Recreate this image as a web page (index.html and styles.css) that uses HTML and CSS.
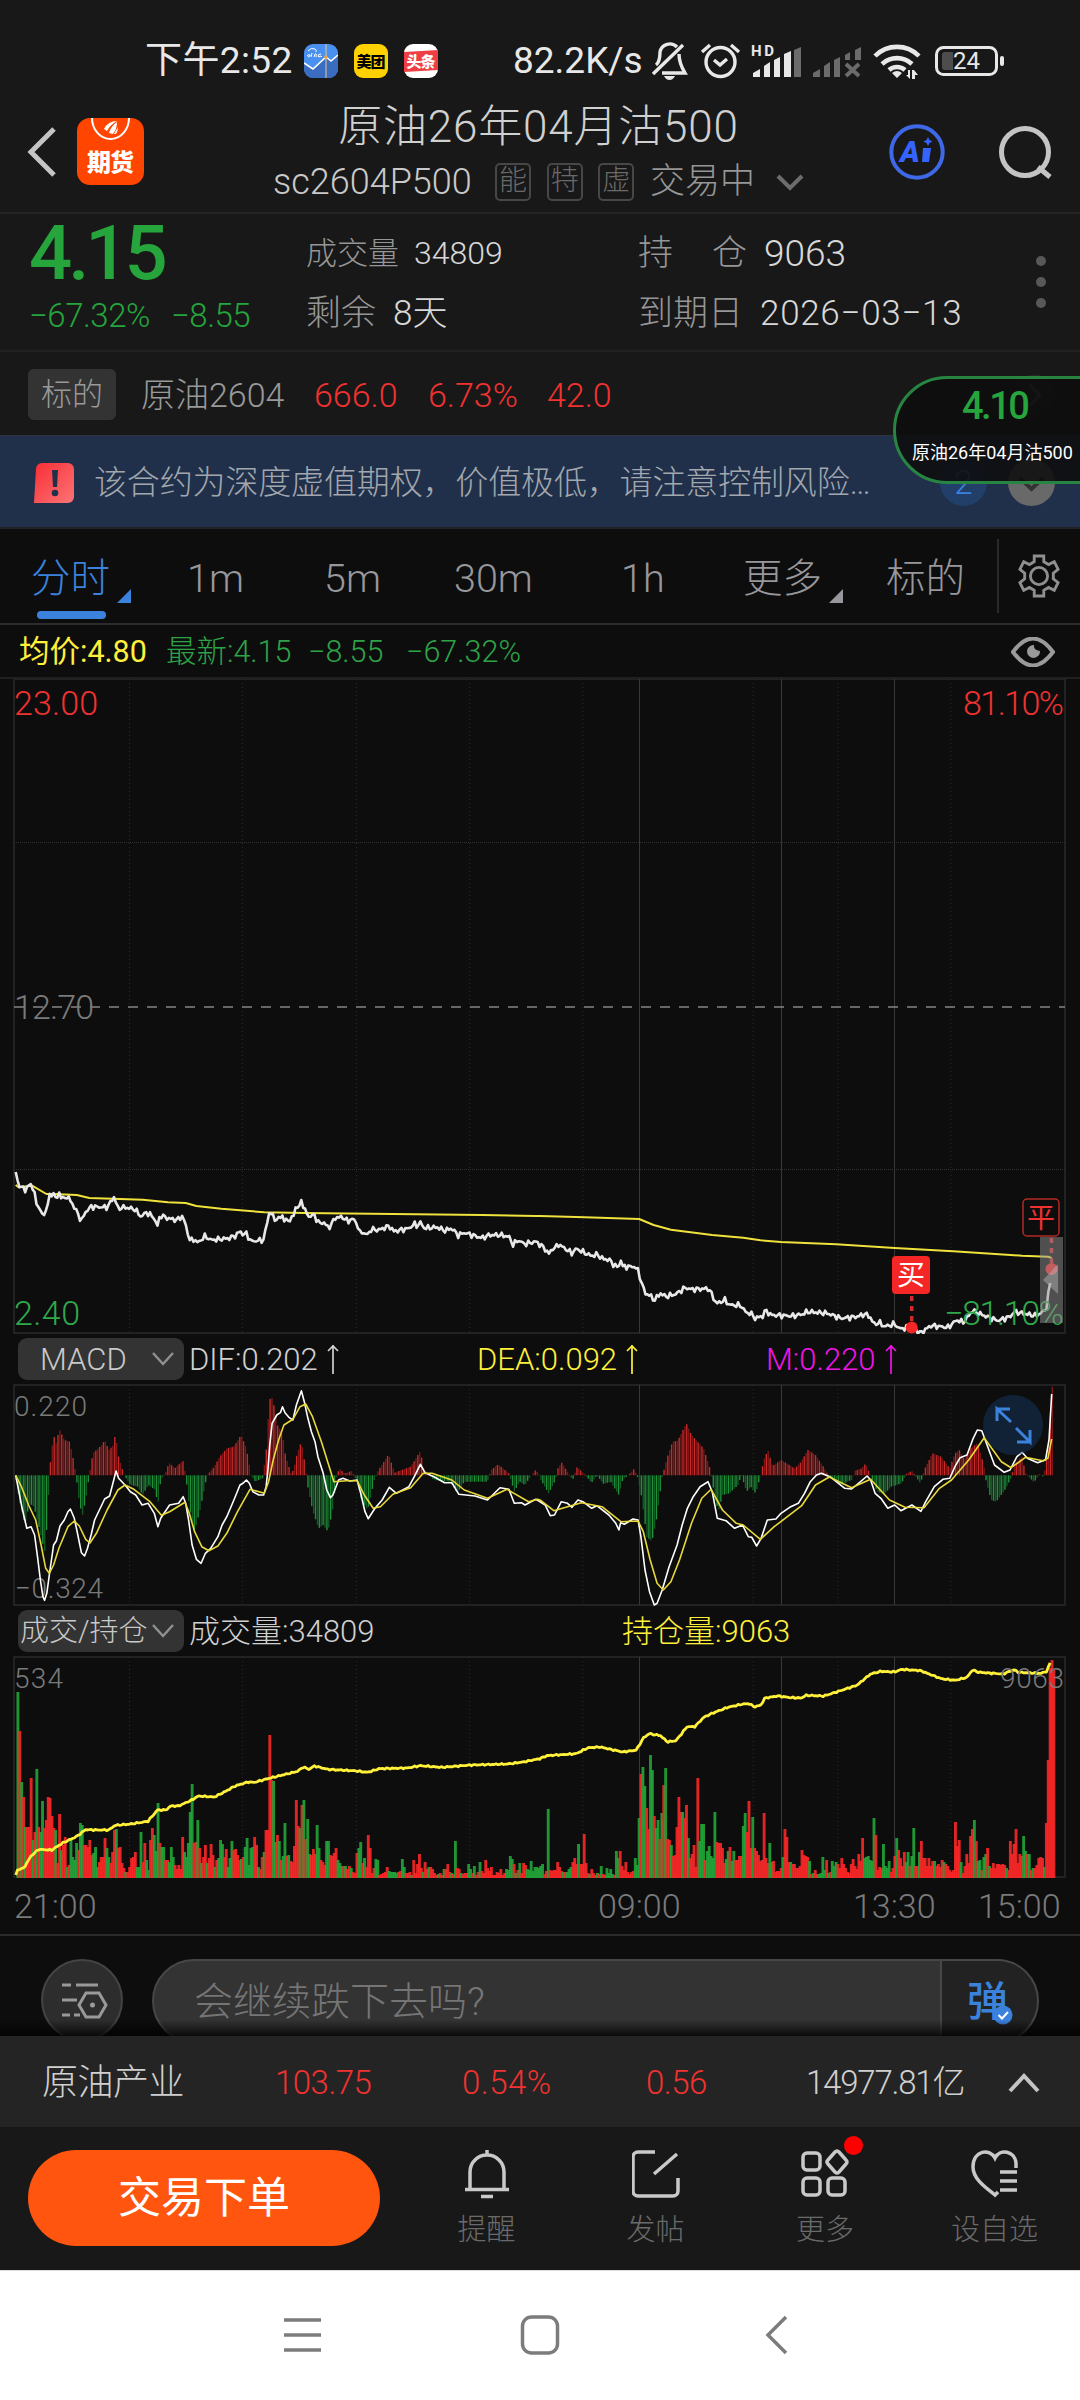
FILE: index.html
```html
<!DOCTYPE html>
<html lang="zh-CN">

<head>
	<meta charset="UTF-8">
	<meta name="viewport" content="width=device-width, initial-scale=1.0">
	<title>原油26年04月沽500</title>
	<link rel="stylesheet" href="styles.css">
	<script src="charts.js" defer></script>
</head>

<body>
	<header class="status">
		<span class="clock">下午2:52</span>
		<svg class="app" viewBox="0 0 34 34">
			<rect width="34" height="34" rx="9" fill="#4a90f0" />
			<path d="M0 19l9 6L22 13l5 4 7-6v14a9 9 0 0 1-9 9H9a9 9 0 0 1-9-9z" fill="#3a6dc0" />
			<path d="M0 19l9 6L22 13l5 4 7-6" fill="none" stroke="#fff" stroke-width="1.6" />
			<path d="M22 0v34" stroke="#e5c890" />
			<circle cx="22" cy="13" r="1.8" fill="#f0a030" />
			<path d="M3 12q2-2 3-1t-2 2M8 9l-1 4M10 13l1-3q2-1 1 3M17 10q-3 0-3 2t3 0l1 1M4 7q3-4 7-2 2 1 1 3" fill="none" stroke="#fff" />
		</svg>
		<svg class="app" viewBox="0 0 34 34">
			<rect width="34" height="34" rx="9" fill="#ffd100" />
			<text x="2.5" y="22.5" textLength="29" class="logo" font-size="15">美团</text>
		</svg>
		<svg class="app" viewBox="0 0 34 34">
			<rect width="34" height="34" rx="9" fill="#fff" />
			<path d="M0 8l34-2v20L0 28z" fill="#ee4044" />
			<text x="2.5" y="23" textLength="29" class="logo" font-size="15" fill="#fff">头条</text>
		</svg>
		<span class="speed">82.2K/s</span>
		<svg class="signals" viewBox="650 38 356 44" width="356" height="44">
			<g fill="none" stroke="#e8e8e8" stroke-width="3.4">
				<path d="M656 64q4-3 4-13a10 10 0 0 1 17-5M679 53q0 9 6 19h-23M653 73l30-29" />
				<path d="M664 75h11q-2 4-5.500 4t-5.500-4z" fill="#e8e8e8" stroke="none" />
				<circle cx="720.500" cy="61" r="14.500" />
				<path d="M714 59l6 5 7-6M702 51l8-7M739 51l-8-7" />
				<path d="M875 55a31 31 0 0 1 44 0M882 63a22 22 0 0 1 30 0M889 69a12 12 0 0 1 16 0" stroke-width="4.600" />
				<rect x="936.500" y="46.500" width="60" height="27" rx="7" stroke-width="3" />
			</g>
			<g fill="#e8e8e8">
				<path d="M892 72q5-4 10 0l-5 5zM910 69v9l-4-4h2v-5zM912 78v-9l2 0 4 5h-3v4z" />
				<path d="M753 76v-4l7-4v8zM764 76V65l6-4v15zM774 76V59l6-3v20zM784 76V53l7-3v26z" />
				<rect x="1000" y="55" width="4" height="10" rx="2" />
				<text x="751" y="55" font-size="15" font-weight="700" textLength="23">HD</text>
				<text x="953" y="68" font-size="24" textLength="27">24</text>
			</g>
			<path d="M794 76V49l7-3v30zM813 76v-4l7-4v8zM824 76V65l6-4v15zM834 76V59l6-3v20zM845 59v-5l5-3v8zM855 59V49l6-3v13z" fill="#6b6b6b" />
			<path d="M846 63l13 12M859 63l-13 12" stroke="#6b6b6b" stroke-width="4" />
			<path d="M953 51h-8a3 3 0 0 0-3 3v12a3 3 0 0 0 3 3h8z" fill="#4d4d4d" />
		</svg>
	</header>

	<section class="head">
		<svg class="back" viewBox="0 0 30 54" width="30" height="54"><path d="M27 4L4 27l23 23" /></svg>
		<svg class="qh" viewBox="0 0 67 67" width="67" height="67">
			<rect width="67" height="67" rx="13" fill="#ff4500" />
			<path d="M15 0a18.500 21 0 0 0 37 0" fill="none" stroke="#fff" stroke-width="2" />
			<path d="M27 11q4-8 13-8-7 4-10 10zM32 15q2-7 8-11 0 7-4 12zM37 16l4-7q0 4-2 7z" fill="#fff" />
			<text x="10" y="53" textLength="47" font-size="24" font-weight="900" fill="#fff">期货</text>
		</svg>
		<div class="title">
			<h1>原油26年04月沽500</h1>
			<p><span class="code">sc2604P500</span><i>能</i><i>特</i><i>虚</i><b>交易中</b>
				<svg viewBox="0 0 28 18" width="28" height="18"><path d="M2 3l12 12L26 3" /></svg></p>
		</div>
		<svg class="ai" viewBox="0 0 56 56" width="56" height="56">
			<circle cx="28" cy="28" r="25.700" />
			<text x="11" y="37.500" font-size="30" textLength="20">A</text>
			<path d="M34 24h8l-2 14h-7zM39 13l1.500 3 3 1.500-3 1.500-1.500 3-1.500-3-3-1.500 3-1.500z" />
		</svg>
		<svg class="search" viewBox="0 0 56 56" width="56" height="56"><circle cx="27" cy="28" r="23.500" /><path d="M40 43l12 10" /></svg>
	</section>

	<section class="quote">
		<div class="last"><strong>4.15</strong><span>−67.32%</span><span>−8.55</span></div>
		<dl class="c1">
			<div class="small"><dt>成交量</dt><dd>34809</dd></div>
			<div><dt>剩余</dt><dd>8天</dd></div>
		</dl>
		<dl class="c2">
			<div><dt class="wide"><span>持</span><span>仓</span></dt><dd>9063</dd></div>
			<div><dt>到期日</dt><dd class="date">2026−03−13</dd></div>
		</dl>
		<div class="dots"><i></i><i></i><i></i></div>
	</section>

	<section class="target">
		<span class="chip">标的</span><span>原油2604</span><em>666.0</em><em>6.73%</em><em>42.0</em>
		<svg viewBox="0 0 42 42" width="42" height="42"><circle cx="21" cy="21" r="20.500" fill="#272727" /><path d="M16 11l10 10-10 10" /></svg>
	</section>

	<section class="warn">
		<svg viewBox="0 0 41 40" width="41" height="40">
			<linearGradient id="w" x2="1" y2="1"><stop stop-color="#f92d35" /><stop offset="1" stop-color="#fb7577" /></linearGradient>
			<path d="M8 0h26a6 6 0 0 1 6 6v28a6 6 0 0 1-6 6H0L2 6a6 6 0 0 1 6-6z" fill="url(#w)" />
			<path d="M18 7h6l-1 17h-4z" fill="#22314b" /><circle cx="21" cy="30" r="3.300" fill="#22314b" />
		</svg>
		<p>该合约为深度虚值期权，价值极低，请注意控制风险…</p>
		<b>2</b>
		<svg viewBox="0 0 47 47" width="47" height="47"><circle cx="23.500" cy="23.500" r="23.500" fill="#696969" /><path d="M12 19l11.500 11L35 19" /></svg>
		<aside class="float"><strong>4.10</strong><span>原油26年04月沽500</span></aside>
	</section>

	<nav class="tabs">
		<a class="on drop">分时</a><a>1m</a><a>5m</a><a>30m</a><a>1h</a><a class="drop">更多</a><a>标的</a>
		<svg viewBox="0 0 44 46" width="44" height="46">
			<path d="M17 8V2h10v6l5 3 6-3 4 8-5 4v6l5 4-4 8-6-3-5 3v6H17v-6l-5-3-6 3-4-8 5-4v-6l-5-4 4-8 6 3z" /><circle cx="22" cy="23" r="9" />
		</svg>
	</nav>

	<section class="avg">
		<span class="yellow">均价:4.80</span><span>最新:4.15</span><span>−8.55</span><span>−67.32%</span>
		<svg viewBox="0 0 44 30" width="44" height="30"><path d="M2 15Q22-12 42 15 22 42 2 15z" /><path d="M23 8q-1 5 6 6a6.500 6.500 0 1 1-6-6z" class="fill" /></svg>
	</section>

	<main>
		<svg id="price" class="panel" width="1080" height="655" viewBox="0 679 1080 655">
			<g class="grid"></g>
			<path class="dash" d="M14 1007h1051" />
			<g class="plot"></g>
			<text x="14" y="715" textLength="84" class="red">23.00</text>
			<text x="963" y="715" textLength="101" class="red">81.10%</text>
			<text x="14" y="1019" textLength="80" class="dim">12.70</text>
			<text x="14" y="1325" textLength="66" class="green">2.40</text>
			<text x="944" y="1325" textLength="120" class="green">−81.10%</text>
			<path d="M1051.500 1238v32" class="lead" /><circle cx="1051.500" cy="1269" r="6" fill="#f52626" />
			<rect x="1040" y="1237" width="23" height="86" fill="#929292" opacity=".5" />
			<path d="M1058 1264v30l-15-14z" fill="#bbb" opacity=".45" />
			<rect x="1023" y="1199" width="36" height="37" rx="4" fill="#0d0d0d" stroke="#b12a26" stroke-width="1.500" />
			<text x="1027" y="1228" font-size="28" class="red mark">平</text>
			<path d="M911.700 1296v30" class="lead" /><circle cx="911.700" cy="1327.500" r="6" fill="#f52626" />
			<rect x="892" y="1256" width="38" height="38" rx="4" fill="#f52626" />
			<text x="897" y="1285" font-size="28" class="mark" fill="#fff">买</text>
		</svg>

		<div class="bar macd">
			<button>MACD<svg viewBox="0 0 22 14" width="22" height="14"><path d="M1 1l10 11L21 1" /></svg></button>
			<span>DIF:0.202<svg class="up" viewBox="0 0 12 30" width="12" height="30"><path d="M6 30V1M1 7l5-5 5 5" /></svg></span>
			<span class="yellow">DEA:0.092<svg class="up" viewBox="0 0 12 30" width="12" height="30"><path d="M6 30V1M1 7l5-5 5 5" /></svg></span>
			<span class="pink">M:0.220<svg class="up" viewBox="0 0 12 30" width="12" height="30"><path d="M6 30V1M1 7l5-5 5 5" /></svg></span>
		</div>
		<svg id="macd" class="panel" width="1080" height="222" viewBox="0 1384 1080 222">
			<g class="grid"></g>
			<g class="dim small"><text x="14" y="1416" textLength="73">0.220</text><text x="15" y="1598" textLength="88">−0.324</text></g>
			<g class="plot"></g>
			<circle cx="1013" cy="1425" r="30" fill="#17375f" opacity=".5" />
			<path d="M1011 1422l-14-13v12M997 1409h13M1016 1428l14 14v-12M1030 1442h-13" fill="none" stroke="#3b82dd" stroke-width="3" />
		</svg>

		<div class="bar vol">
			<button>成交/持仓<svg viewBox="0 0 22 14" width="22" height="14"><path d="M1 1l10 11L21 1" /></svg></button>
			<span>成交量:34809</span>
			<span class="yellow">持仓量:9063</span>
		</div>
		<svg id="vol" class="panel" width="1080" height="222" viewBox="0 1656 1080 222">
			<g class="grid"></g>
			<g class="plot"></g>
			<g class="dim small"><text x="14" y="1688" textLength="49">534</text><text x="1000" y="1688" textLength="64">9063</text></g>
		</svg>
		<div class="times"><span>21:00</span><span>09:00</span><span>13:30</span><span>15:00</span></div>
	</main>

	<section class="comment">
		<div class="set"><svg viewBox="0 0 48 38" width="48" height="38"><path d="M2 4h9M16 4h22M2 19h15M2 34h8M14 34h6" /><path d="M26 12h13l7 12-7 12H26l-7-12z" /><circle cx="32.500" cy="24" r="2.500" class="fill" /></svg></div>
		<div class="input"><span>会继续跌下去吗?</span>
			<b>弹<svg viewBox="0 0 20 20" width="20" height="20"><circle cx="10" cy="10" r="9.500" fill="#3b82dd" /><path d="M5.500 10l3.500 3.500 6-6.500" fill="none" stroke="#fff" stroke-width="2" /></svg></b>
		</div>
	</section>

	<section class="index">
		<span>原油产业</span><em>103.75</em><em class="pct">0.54%</em><em>0.56</em><span class="amount">14977.81亿</span>
		<svg viewBox="0 0 32 22" width="32" height="22"><path d="M2 19L16 4l14 15" /></svg>
	</section>

	<footer>
		<button class="order">交易下单</button>
		<a><svg viewBox="0 0 48 50" width="48" height="50"><path d="M7 40V23a17 17 0 0 1 34 0v17M2 40.500h44M24 6V1M18 47.500h12" /></svg>提醒</a>
		<a><svg viewBox="0 0 48 50" width="48" height="50"><path d="M23 3H6a5 5 0 0 0-5 5v34a5 5 0 0 0 5 5h35a5 5 0 0 0 5-5V29M22 25L45 5" /></svg>发帖</a>
		<a class="new"><svg viewBox="0 0 48 50" width="48" height="50"><rect x="2" y="4" width="17" height="17" rx="4" /><rect x="2" y="29" width="17" height="17" rx="4" /><rect x="27" y="29" width="17" height="17" rx="4" /><path d="M34 3q2-2 4 0l7 8q2 2 0 4l-7 8q-2 2-4 0l-7-8q-2-2 0-4z" /></svg>更多</a>
		<a><svg viewBox="0 0 48 50" width="48" height="50"><path d="M45 19V14C44 2 29-1 24 9 19-1 2 1 2 18c0 13 15 22 22 28l3-3M29 23h17M29 32h17M29 41h17" /></svg>设自选</a>
	</footer>

	<div class="sysnav">
		<svg viewBox="0 0 1080 129" width="1080" height="129"><path d="M284 49h37M284 64h37M284 79h37M786 46l-18 18 18 18" /><rect x="522.500" y="46" width="35" height="36" rx="9" /></svg>
	</div>
</body>

</html>
```
FILE: styles.css
```css
* {
	margin: 0;
	padding: 0;
	box-sizing: border-box;
}

body {
	width: 1080px;
	height: 2400px;
	overflow: hidden;
	background: #181818;
	color: #d0d0d0;
	font: 300 34px/1 Roboto, "Noto Sans CJK SC", sans-serif;
	white-space: nowrap;
}

svg {
	display: block;
	flex: none;
}

em, i, b {
	font-style: normal;
	font-weight: inherit;
}

em,
.red {
	color: #f03230;
	fill: #f03230;
}

.yellow {
	color: #fff03c !important;
}

.pink {
	color: #ee16e6;
}

/* status bar */
.status {
	display: flex;
	align-items: center;
	height: 98px;
	padding: 23px 0 0 145px;
	font-size: 37px;
	font-weight: 400;
	color: #e8e8e8;
}

.clock {
	width: 159px;
	letter-spacing: .4px;
}

.app {
	width: 34px;
	height: 34px;
	margin-right: 16px;
}

.logo {
	font-weight: 900;
}

.speed {
	width: 137px;
	margin-left: 59px;
}

/* title */
.head {
	display: grid;
	grid-template-columns: 50px 67px 1fr 56px 56px;
	align-items: center;
	height: 116px;
	padding: 0 26px 7px 27px;
	border-bottom: 2px solid #242424;
}

.head path,
.head circle {
	fill: none;
	stroke: #c4c4c4;
	stroke-width: 5;
}

.head .qh path {
	stroke: #fff;
	stroke-width: 2;
}

.head .qh path:nth-of-type(2) {
	fill: #fff;
	stroke: none;
}

.title {
	display: grid;
	justify-items: center;
	gap: 14px;
	margin-right: 9px;
	padding-top: 2px;
}

h1 {
	font-size: 44px;
	font-weight: 300;
	letter-spacing: .8px;
}

.title p {
	display: flex;
	align-items: center;
	font-size: 35px;
	color: #969696;
}

.code {
	width: 222px;
	color: #c9c9c9;
	font-size: 36px;
}

.title i {
	width: 36px;
	height: 38px;
	margin-right: 15.7px;
	border: 2px solid #474747;
	border-radius: 5px;
	color: #6a6a6a;
	font-size: 28px;
	line-height: 32px;
	text-align: center;
}

.title b {
	width: 126px;
}

.title p path {
	stroke: #6d6d6d;
	stroke-width: 4;
}

.head .ai {
	margin-left: -53px;
}

.head .ai circle {
	stroke: #3f68e6;
	stroke-width: 4;
}

.ai text,
.head .ai path {
	fill: #3463ff;
	stroke: none;
	font-weight: 900;
	font-style: italic;
}

/* quote */
.quote {
	display: grid;
	grid-template-columns: 277px 332px 398px 1fr;
	height: 138px;
	padding-left: 29px;
	border-bottom: 2px solid #212121;
}

.last {
	display: grid;
	grid-template: 77px 1fr / 142px 1fr;
	color: #25a53c;
	font-size: 33px;
	letter-spacing: -.5px;
}

.last strong {
	grid-column: 1/3;
	padding-top: 1px;
	font-size: 76px;
	font-weight: 500;
	letter-spacing: -4px;
}

.last span {
	padding-top: 8px;
}

dl {
	display: grid;
	grid-template-rows: 40px 40px;
	row-gap: 20px;
	padding-top: 19px;
}

dl div {
	display: flex;
	align-items: center;
	gap: 17px;
	font-size: 35px;
}

dl .small {
	gap: 15px;
	font-size: 31px;
}

.small dd {
	font-size: 32px;
}

dl dt {
	color: #969696;
}

dl dd {
	color: #d8d8d8;
}

dl .wide {
	display: flex;
	justify-content: space-between;
	width: 109px;
}

.wide + dd {
	font-size: 37px;
}

.date {
	letter-spacing: .7px;
}

.dots {
	display: grid;
	align-content: center;
	gap: 11px;
}

.dots i {
	width: 10px;
	height: 10px;
	border-radius: 50%;
	background: #585858;
}

/* underlying */
.target {
	display: grid;
	grid-template-columns: 113px 173px 114px 119px 467px 1fr;
	align-items: center;
	height: 83px;
	padding: 2px 0 0 28px;
	color: #999;
	font-size: 34px;
}

.chip {
	width: 88px;
	height: 51px;
	border-radius: 6px;
	background: #333;
	font-size: 31px;
	line-height: 51px;
	text-align: center;
}

.target path {
	fill: none;
	stroke: #555;
	stroke-width: 3;
}

/* risk notice */
.warn {
	position: relative;
	display: grid;
	grid-template-columns: 60px 846px 68px 47px;
	align-items: center;
	height: 94px;
	padding: 2px 0 0 34px;
	border-top: 1px solid #30353d;
	border-bottom: 2px solid #202227;
	background: #20304a;
	color: #a2a7ae;
	font-size: 33px;
}

.warn p {
	letter-spacing: -.15px;
}

.warn b {
	width: 47px;
	height: 47px;
	border-radius: 50%;
	background: #213f68;
	color: #3b82dd;
	line-height: 47px;
	text-align: center;
}

.warn path:not([fill]) {
	fill: none;
	stroke: #333;
	stroke-width: 4;
}

.float {
	position: absolute;
	right: -3px;
	top: -60px;
	width: 190px;
	height: 108px;
	padding: 8px 0 0 16px;
	border: 3px solid #288541;
	border-radius: 54px 0 0 54px;
	background: #0c0c0ce0;
	color: #fff;
	font-size: 18px;
	font-weight: 400;
}

.float strong {
	display: block;
	padding-left: 50px;
	margin-bottom: 19px;
	color: #25a53c;
	font-size: 38px;
	font-weight: 500;
	letter-spacing: -2.5px;
}

/* periods */
.tabs {
	display: grid;
	grid-template-columns: 156px 137px 130px 167px 122px 143px 110px 1fr;
	align-items: center;
	height: 96px;
	padding-left: 31px;
	border-bottom: 2px solid #2c2c2c;
	background: #0d0d0d;
	color: #97979c;
	font-size: 39.500px;
}

.tabs a {
	position: relative;
	padding-top: 6px;
}

.tabs .on {
	color: #3b82dd;
}

.on::before {
	content: "";
	position: absolute;
	left: 6px;
	top: 58px;
	width: 69px;
	height: 8px;
	border-radius: 4px;
	background: currentcolor;
}

.drop::after {
	content: "";
	position: absolute;
	left: 86px;
	top: 36px;
	border-left: 14px solid transparent;
	border-bottom: 14px solid currentcolor;
}

.tabs svg {
	width: 64px;
	height: 74px;
	margin-left: 1px;
	padding: 14px 1px 14px 19px;
	border-left: 2px solid #292929;
	fill: none;
	stroke: #8f8f8f;
	stroke-width: 3;
}

.avg {
	display: grid;
	grid-template-columns: 147px 142px 98px 605px 44px;
	align-items: center;
	height: 54px;
	padding: 2px 0 0 19px;
	border-bottom: 2px solid #202020;
	background: #0d0d0d;
	color: #2da347;
	font-size: 30.500px;
}

.avg .yellow {
	font-weight: 400;
}

.avg svg {
	fill: none;
	stroke: #9a9a9a;
	stroke-width: 4;
}

svg .fill {
	fill: #9a9a9a;
	stroke: none;
}

/* charts */
main {
	height: 1257px;
	background: #0d0d0d;
}

.panel {
	font-size: 34px;
}

.small text {
	font-size: 28px;
}

.green {
	fill: #2fa84a;
}

.dim {
	fill: #7a7a7a;
}

.dash,
.lead {
	fill: none;
	stroke: #858585;
	stroke-width: 1.5;
	stroke-dasharray: 10 9;
}

.lead {
	stroke: #d02a2a;
	stroke-width: 3.5;
	stroke-dasharray: 5 5;
}

.mark {
	font-weight: 400;
}

.bar {
	display: grid;
	grid-template-columns: 171px 288px 289px 1fr;
	align-items: center;
	height: 50px;
	padding-left: 18px;
	font-size: 31px;
}

.vol {
	grid-template-columns: 171px 433px 1fr;
}

.bar button {
	display: flex;
	align-items: center;
	justify-content: space-between;
	width: 166px;
	height: 42px;
	padding: 0 10px 0 22px;
	border: 0;
	border-radius: 9px;
	background: #333;
	color: #c9c9c9;
	font: inherit;
}

.vol button {
	padding-left: 2px;
	font-size: 29px;
}

.bar span {
	display: flex;
	align-items: center;
	gap: 9px;
}

.bar button path,
.up path {
	fill: none;
	stroke: #909090;
	stroke-width: 2.5;
}

.up path {
	stroke: currentcolor;
	stroke-width: 1.7;
}

.times {
	display: grid;
	grid-template-columns: 584px 255px 125px 1fr;
	align-items: center;
	height: 58px;
	padding: 0 0 1px 14px;
	border-bottom: 2px solid #2b2b2b;
	color: #7a7a7a;
	font-size: 34px;
}

/* comment strip, cut off by the bars below */
.comment {
	position: relative;
	display: flex;
	gap: 29px;
	height: 100px;
	padding: 23px 41px 0;
	overflow: hidden;
	background: #0d0d0d;
}

.comment::after {
	content: "";
	position: absolute;
	inset: 84px 0 0;
	background: linear-gradient(#0000, #000c);
}

.set {
	display: grid;
	place-items: center;
	width: 82px;
	height: 82px;
	border: 2px solid #444;
	border-radius: 50%;
	background: #2d2d2d;
}

.set svg {
	margin-left: 4px;
	fill: none;
	stroke: #999;
	stroke-width: 3;
}

.input {
	display: flex;
	flex: 1;
	height: 84px;
	border: 2px solid #474747;
	border-radius: 42px;
	background: #333;
	color: #757575;
	font-size: 39px;
	line-height: 82px;
	overflow: hidden;
}

.input span {
	flex: 1;
	padding-left: 40px;
}

.input b {
	position: relative;
	width: 97px;
	padding-left: 25px;
	border-left: 2px solid #474747;
	background: #222;
	color: #3b82dd;
	font-size: 41px;
	font-weight: 500;
}

.input b svg {
	position: absolute;
	left: 51px;
	top: 44px;
}

.index {
	display: grid;
	grid-template-columns: 233px 187px 184px 160px 202px 1fr;
	align-items: center;
	height: 91px;
	padding: 2px 0 0 42px;
	background: #242424;
	font-size: 33px;
	letter-spacing: -.5px;
}

.index .pct {
	letter-spacing: .5px;
}

.index .amount {
	letter-spacing: -1.2px;
}

.index span:first-child {
	font-size: 36px;
}

.index path {
	fill: none;
	stroke: #c4c4c4;
	stroke-width: 4;
}

footer {
	display: grid;
	grid-template-columns: 374px 169px 169px 170px 169px;
	height: 143px;
	padding: 23px 0 0 28px;
}

.order {
	width: 352px;
	height: 96px;
	border: 0;
	border-radius: 48px;
	background: #ff550f;
	color: #fff;
	font: 400 43px/96px Roboto, "Noto Sans CJK SC", sans-serif;
}

footer a {
	position: relative;
	display: grid;
	justify-items: center;
	align-content: start;
	gap: 17px;
	color: #6a6a6a;
	font-size: 29px;
}

footer svg {
	margin-top: -1px;
	fill: none;
	stroke: #c9c9c9;
	stroke-width: 3.5;
}

.new::after {
	content: "";
	position: absolute;
	left: 104px;
	top: -14px;
	width: 19px;
	height: 19px;
	border-radius: 50%;
	background: #f00;
}

.sysnav {
	height: 130px;
	border-top: 1px solid #ddd;
	background: #fff;
	fill: none;
	stroke: #7c7c7c;
	stroke-width: 3.5;
}
```
FILE: charts.js
```js
const X0 = 15.7, STEP = 1.894, COUNT = 548;
const RED = ['#c82a2a', '#7d1717'], GREEN = ['#20913a', '#135a25'];

// points come in two halves (left, right), each with its own horizontal scale
const pts = s => s.trim().split(/\s+/).map(p => p.split(',').map(Number));
const join = (a, b, top) => [
	...pts(a).map(([x, y]) => [x / 2.8, top + y / 3]),
	...pts(b).map(([x, y]) => [540 + x / 2.904, top + y / 3])
];

const at = (line, x) => {
	let i = 1;
	while (i < line.length - 1 && line[i][0] < x) i++;
	const [a, b] = [line[i - 1], line[i]];
	return a[1] + (b[1] - a[1]) * Math.min(1, Math.max(0, (x - a[0]) / (b[0] - a[0] || 1)));
};

const price = join(
	`44,156 47,190 52,178 56,205 63,200 68,212 85,192 97,215 103,268 108,252 115,280 123,287 130,265 138,232 150,217 157,242 166,217 175,240 185,228 195,238 210,265 228,303 240,275 255,260 300,262 320,230 330,265 350,262 378,268 395,290 410,277 430,292 442,320 448,285 470,295 495,300 512,288 532,362 545,358 553,369 575,348 590,360 640,355 660,347 672,333 682,345 690,340 702,364 738,360 755,272 768,297 780,297 790,285 797,304 820,295 828,260 838,262 844,240 855,275 868,292 877,282 895,312 905,305 920,325 940,292 960,292 975,305 985,295 1000,310 1007,340 1015,335 1027,346 1040,328 1060,330 1090,318 1103,334 1145,325 1160,312 1170,318 1177,307 1187,324 1225,322 1245,332 1265,325 1283,346 1300,338 1330,348 1350,354 1370,345 1400,345 1425,350 1437,375 1450,360 1468,372 1500,365 1520,380 1538,402 1550,380`,
	`0,375 20,380 26,402 40,388 53,373 72,385 93,400 105,386 125,396 150,408 165,403 185,418 200,418 212,432 228,444 234,415 240,440 275,440 285,452 294,485 305,520 318,525 332,541 350,520 365,530 395,522 422,503 440,508 490,506 500,525 512,551 537,540 550,555 583,556 600,580 610,578 625,595 647,588 655,570 670,585 735,588 765,582 775,575 835,580 875,595 920,590 945,582 958,590 970,613 985,607 1000,620 1030,612 1045,627 1080,620 1104,640 1135,617 1185,622 1210,600 1230,607 1256,572 1285,585 1330,602 1365,590 1378,575 1400,580 1440,587 1462,575 1472,560 1480,490 1486,477`, 1120);

const avg = join(
	`44,195 52,202 90,197 130,222 150,222 215,225 250,234 400,239 470,247 520,249 550,258 620,266 740,277 850,279 1350,285 1500,288`,
	`0,288 130,292 288,297 330,315 380,329 500,345 590,353 640,361 700,366 860,373 1030,384 1200,394 1400,407 1475,410 1486,414`, 1120);

const dif = join(
	`44,1066 52,1110 62,1165 75,1225 87,1220 97,1245 105,1310 113,1380 120,1430 125,1441 131,1420 140,1350 150,1275 158,1262 168,1218 180,1200 190,1175 197,1167 208,1195 215,1230 228,1298 237,1308 245,1285 255,1245 265,1200 285,1155 293,1137 307,1128 325,1053 332,1075 350,1095 365,1115 380,1125 398,1155 415,1150 432,1180 442,1220 450,1195 475,1155 500,1150 513,1130 520,1150 528,1200 538,1275 550,1318 563,1330 575,1300 590,1285 610,1250 622,1215 635,1190 655,1140 672,1095 680,1090 690,1080 698,1090 708,1115 725,1125 738,1125 745,1100 750,1050 755,980 762,910 775,885 785,878 791,860 798,878 810,893 820,900 830,855 844,812 852,845 862,895 872,935 882,965 890,1010 905,1060 915,1110 925,1133 932,1125 948,1080 960,1075 980,1083 1000,1080 1010,1120 1022,1175 1031,1196 1050,1165 1070,1140 1090,1102 1110,1120 1145,1100 1160,1070 1177,1033 1190,1058 1215,1070 1245,1088 1265,1088 1285,1123 1330,1128 1365,1140 1400,1103 1425,1108 1440,1150 1460,1148 1470,1155 1500,1138 1520,1150`,
	`0,1145 15,1155 30,1187 42,1185 62,1145 80,1150 93,1162 110,1140 125,1145 150,1165 165,1157 200,1185 220,1210 229,1230 234,1208 245,1213 270,1197 285,1200 293,1250 305,1350 318,1415 332,1455 340,1450 355,1410 375,1340 398,1275 413,1215 428,1165 445,1130 465,1100 488,1085 500,1115 515,1195 540,1202 565,1225 588,1215 605,1250 615,1252 629,1278 642,1255 660,1200 685,1197 700,1180 725,1162 750,1150 768,1120 785,1085 803,1065 817,1060 845,1072 885,1105 905,1107 925,1090 950,1068 960,1080 973,1120 990,1135 1010,1165 1030,1155 1048,1172 1080,1155 1106,1174 1120,1145 1145,1100 1170,1078 1190,1075 1205,1040 1220,1013 1240,1005 1258,955 1270,930 1283,932 1300,980 1320,1035 1348,1057 1365,1050 1385,1010 1400,997 1415,1015 1445,1028 1468,1020 1478,960 1486,822`, 1120);

const dea = join(
	`44,1066 60,1100 80,1155 100,1200 115,1275 128,1345 138,1360 150,1335 165,1285 190,1220 208,1203 222,1218 240,1258 252,1269 270,1240 300,1170 330,1110 350,1095 375,1108 420,1145 452,1186 475,1175 518,1147 530,1180 545,1235 565,1280 585,1292 610,1278 635,1240 665,1175 700,1108 740,1120 752,1085 765,1020 780,960 795,915 820,898 840,860 856,852 875,890 900,965 935,1085 970,1082 1000,1082 1020,1125 1045,1165 1065,1160 1100,1123 1150,1103 1185,1060 1210,1060 1265,1080 1300,1110 1365,1135 1420,1108 1480,1145 1505,1138`,
	`0,1140 40,1172 120,1148 180,1160 235,1205 285,1203 300,1235 320,1320 340,1390 358,1410 380,1385 405,1320 440,1210 470,1135 497,1108 530,1170 570,1210 590,1215 640,1258 680,1220 760,1157 800,1095 840,1071 905,1103 960,1078 1015,1140 1060,1162 1115,1163 1160,1105 1195,1080 1245,1020 1290,953 1340,1025 1368,1043 1410,1012 1460,1022 1475,1015 1486,957`, 1120);

const hist = join(
	`44,1066 52,1130 70,1215 82,1150 95,1160 108,1215 125,1295 133,1200 138,1066 142,1015 150,945 157,970 166,928 180,960 195,965 205,1015 213,1066 220,1130 230,1190 240,1140 250,1066 260,1000 285,975 293,960 305,990 318,975 323,940 332,1010 348,1066 365,1095 385,1100 400,1125 415,1095 435,1110 442,1158 450,1080 465,1055 473,1028 490,1045 512,1022 520,1066 530,1160 545,1235 560,1170 580,1066 600,1040 615,1010 635,985 655,980 675,945 690,985 703,1066 715,1085 735,1075 745,1000 752,880 758,820 768,860 778,920 790,935 800,1010 815,1060 822,1050 832,1000 844,965 855,1040 860,1090 875,1170 892,1225 905,1215 918,1235 930,1180 942,1070 950,1045 965,1060 985,1053 1000,1085 1012,1140 1030,1170 1048,1080 1060,1050 1088,1003 1105,1058 1150,1040 1177,993 1187,1050 1200,1062 1215,1080 1260,1085 1280,1120 1300,1085 1365,1085 1375,1050 1395,1033 1425,1060 1440,1115 1455,1085 1470,1095 1485,1070 1500,1050 1510,1065`,
	`0,1075 25,1120 45,1080 52,1045 63,1028 85,1064 95,1080 108,1040 128,1062 150,1088 165,1066 185,1092 205,1085 229,1125 240,1080 260,1062 273,1047 285,1075 295,1130 310,1250 325,1265 338,1200 355,1070 370,1010 385,965 400,962 425,910 440,945 460,968 475,985 492,1040 500,1080 510,1150 520,1168 530,1125 550,1120 575,1095 585,1066 600,1115 612,1100 626,1120 640,1070 650,1020 662,990 675,1038 700,1020 740,1045 755,1030 778,990 800,1005 820,1035 840,1070 870,1095 905,1080 915,1052 935,1045 946,1030 960,1068 980,1115 1000,1122 1020,1100 1050,1090 1065,1060 1080,1053 1095,1075 1105,1090 1118,1045 1140,1000 1165,1010 1190,1045 1205,1000 1218,990 1232,1020 1250,985 1270,970 1288,1030 1295,1080 1310,1140 1325,1145 1350,1110 1370,1070 1376,1035 1400,1010 1410,1060 1435,1087 1450,1062 1462,1070 1470,1030 1478,970 1486,800`, 1120);

const open = join(
	`44,825 50,808 66,805 87,768 108,748 145,750 177,728 214,710 240,689 275,690 305,690 322,676 366,672 414,664 441,630 465,630 478,618 500,618 537,600 555,588 600,591 630,575 658,558 695,546 712,547 753,535 833,514 849,501 865,508 880,498 918,508 1000,513 1029,517 1062,506 1140,504 1177,497 1235,502 1320,495 1420,492 1465,486 1500,478`,
	`0,476 20,467 105,461 140,443 175,441 240,456 280,450 300,414 317,401 350,407 370,426 395,422 427,380 450,380 475,352 500,340 545,322 590,312 608,311 622,321 642,315 653,294 690,288 730,293 760,294 772,286 825,288 920,256 960,222 990,214 1030,216 1050,208 1105,212 1165,236 1205,241 1240,232 1256,210 1275,217 1345,222 1376,209 1390,217 1455,220 1472,214 1485,178`, 1600);

// one bar a minute, negative = falling
const volume = [
	-186, 147, -96, 81, -51, 51, 51, 100, -38, 46, -109, 51, -46, -77, 50, 58, 81, 80, 62, 50,
	-48, 15, 64, -28, 33, 41, -11, 13, -38, -21, -18, -35, 28, -55, -53, 33, 33, 31, 38, 23,
	-25, -31, -11, 16, 21, 21, 40, -30, -21, 15, 26, 48, -49, 30, 31, 15, 10, -6, 6, 11,
	20, 21, 26, -11, -11, -46, 16, 35, -18, -8, 38, 50, -43, -27, -75, 35, -31, -31, 18, 18,
	-16, -31, -21, 13, 9, 13, 9, 41, -26, -21, -35, -66, -94, 35, 36, -58, 30, -15, 21, 33,
	-15, 20, 34, 23, -11, 18, -20, -38, -34, 21, 29, -11, -20, -37, 28, 29, 23, 18, -19, 21,
	-31, -40, -13, -30, -31, 41, 33, -11, 9, 21, -26, 48, 48, 143, 98, -97, -36, 43, -37, 18,
	-22, -55, 22, -23, 17, 16, 32, 78, 52, -50, 73, -78, 39, -59, -24, 23, 29, 24, -53, -30,
	18, 16, 13, -37, -37, 23, 22, 25, 30, -18, -15, -12, 12, -12, 9, 12, -10, 6, 5, 25,
	-30, -36, 15, -20, 11, 43, 30, 5, 10, -19, -18, 3, 4, 5, 6, 11, -7, -6, -6, -6,
	-5, 6, 7, -19, -11, 5, 5, 6, -3, 18, 5, 14, 24, 10, -6, 16, 9, -11, 11, 9,
	5, 3, -4, 5, 3, -9, 9, 14, 6, -5, 4, -37, 10, 9, -5, 4, 5, 5, -14, -9,
	5, -12, 3, 6, -16, 7, 5, 18, 10, 7, 11, 3, 3, 6, 5, 9, 3, 5, -9, -8,
	-22, -19, 14, -5, 8, -15, 5, 15, 13, -9, -8, -17, -7, -11, -11, -10, -12, -14, 4, 7,
	-69, 8, 7, 8, 8, 16, 11, 7, -6, 6, -6, -9, -11, 16, 20, 14, -34, 14, 14, 44,
	15, 5, -4, 9, 5, 3, -5, 4, -12, 4, 3, -10, -5, -9, -4, 3, -27, -20, 27, 12,
	8, 16, 6, 4, 6, 7, -20, -13, -60, 104, -111, -92, 70, 49, -123, -108, 62, -50, -58, 39,
	-65, 93, -110, 39, 38, -33, 22, 23, 51, 81, 66, -66, 60, 73, -40, 20, 24, 33, 11, 100,
	-37, -54, -54, 18, -27, -32, -22, -20, -66, 36, 35, 35, 30, 15, -19, -27, 31, -17, -27, 18,
	18, 22, 22, -52, -65, 46, 77, 30, -61, 30, 27, 23, 17, 18, 65, 20, 15, -35, -16, 17,
	6, 7, 7, 10, -21, 49, 41, 16, -16, 14, 14, 10, 10, 12, 28, 23, 22, 21, -17, 4,
	-5, 8, 4, -4, -5, -21, -8, 18, -5, 6, -17, -12, -16, 14, 10, 20, 14, 10, 6, 5,
	14, 19, 12, 9, 24, 17, 40, -20, -21, -22, -18, -17, -60, 43, 8, 11, 10, -34, -12, -10,
	-17, 6, 10, 22, -40, 28, 20, 12, 26, -16, -26, 12, -22, -50, 12, 12, -26, 37, 20, 20,
	12, 20, 12, 17, -17, 12, 14, 11, 18, -16, 14, 12, 8, 6, 8, 56, 32, 38, -16, 5,
	12, 24, 15, 42, 49, -58, 37, -17, -18, 8, -21, -24, 30, -12, 10, 15, 10, 14, 14, 13,
	14, 13, -10, 8, 37, 24, 34, 49, 15, 24, 22, -42, -27, 24, -24, 8, -10, 10, 13, 20,
	21, 20, -11, 55, 118, 210, 218, 208
];

const poly = (line, color, width) =>
	`<polyline points="${line.map(p => p.map(n => n.toFixed(1))).join(' ')}" fill="none" stroke="${color}" stroke-width="${width}" stroke-linejoin="round"/>`;

const jagged = (line, amp) => Array.from({ length: COUNT }, (_, i) => {
	const x = X0 + i * STEP * .9985;
	return [x, at(line, x) + Math.sin(i * 12.9898) * Math.sin(i * 4.1) * amp];
});

const draw = (id, html) => document.querySelector(`#${id} .plot`).innerHTML = html;

for (const [id, top, bottom, rows] of [['price', 679, 1333, [842, 1169]], ['macd', 1385, 1605, []], ['vol', 1657, 1877, []]]) {
	let g = `<rect x="14" y="${top}" width="1051" height="${bottom - top}" fill="none" stroke="#2a2a2a" stroke-width="1.5"/>`;
	for (const x of [639.5, 781.5, 894.5]) g += `<path d="M${x} ${top}V${bottom}" stroke="#383838"/>`;
	for (const x of [129.5, 242.5, 356.5, 469.5, 583, 753, 838, 951])
		g += `<path d="M${x} ${top}V${bottom}" stroke="#2a2a2a" stroke-dasharray="1 3"/>`;
	for (const y of rows) g += `<path d="M14 ${y}.5h1051" stroke="#333" stroke-dasharray="1 1"/>`;
	document.querySelector(`#${id} .grid`).innerHTML = g;
}

draw('price', poly(avg, '#f0e23c', 2) + poly(jagged(price, 3), '#e8e8e8', 2.6));

let bars = '';
for (let i = 0; i < COUNT; i++) {
	const x = X0 + .6 + i * STEP, y = at(hist, x);
	bars += `<path d="M${x} 1475.3V${y}" stroke="${(y < 1475.3 ? RED : GREEN)[i % 2]}" stroke-width="1.4"/>`;
}
draw('macd', bars + poly(dif, '#fff', 1.6) + poly(dea, '#e8d83c', 1.6));

draw('vol', volume.map((v, i) =>
	`<path d="M${17.9 + i * STEP} 1878v${-Math.abs(v)}" stroke="${v > 0 ? '#ff2828' : '#22a83a'}" stroke-width="2.9" opacity=".88"/>`
).join('') + poly(jagged(open, .8), '#fff03a', 2.8));
```
